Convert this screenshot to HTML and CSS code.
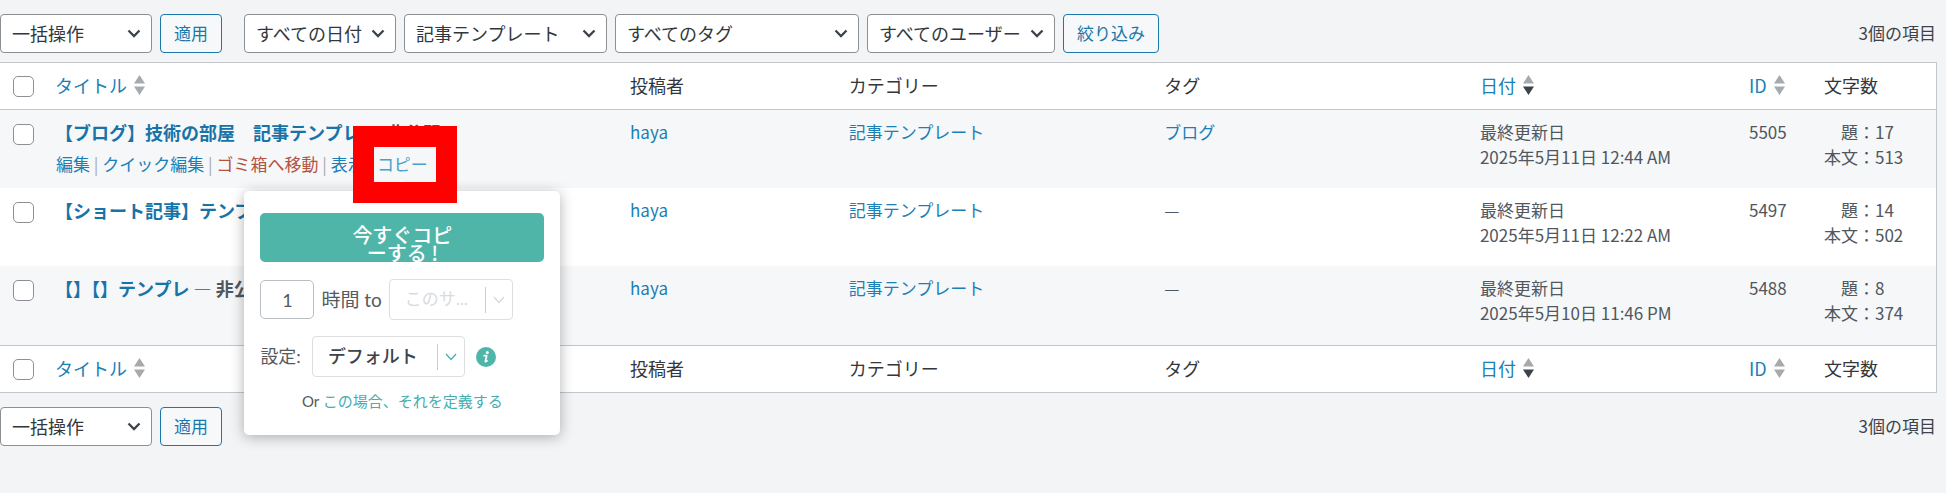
FILE: index.html
```html
<!DOCTYPE html>
<html lang="ja">
<head>
<meta charset="utf-8">
<title>投稿一覧</title>
<link rel="stylesheet" href="styles.css">
</head>
<body>
<svg class="defs" aria-hidden="true">
  <symbol id="chevron" viewBox="0 0 14 9"><path d="M1.5 1.5 7 7l5.500-5.500" fill="none" stroke="currentColor" stroke-width="2.300"/></symbol>
  <symbol id="chevron-thin" viewBox="0 0 12 8"><path d="M1 1 6 6.500 11 1" fill="none" stroke="currentColor" stroke-width="1.300"/></symbol>
  <symbol id="sort" viewBox="0 0 11 20"><path d="M5.500 0 11 8.500H0z" fill="#a7aaad"/><path class="sort-down" d="M0 11.500h11l-5.500 8.500z"/></symbol>
</svg>

<main class="page">
  <form class="tablenav">
    <span class="select bulk"><select aria-label="一括操作"><option>一括操作</option></select><svg class="chevron"><use href="#chevron"/></svg></span>
    <button type="button" class="button">適用</button>
    <div class="filters">
      <span class="select dates"><select aria-label="日付で絞り込む"><option>すべての日付</option></select><svg class="chevron"><use href="#chevron"/></svg></span>
      <span class="select categories"><select aria-label="カテゴリーで絞り込む"><option>記事テンプレート</option></select><svg class="chevron"><use href="#chevron"/></svg></span>
      <span class="select tags"><select aria-label="タグで絞り込む"><option>すべてのタグ</option></select><svg class="chevron"><use href="#chevron"/></svg></span>
      <span class="select users"><select aria-label="ユーザーで絞り込む"><option>すべてのユーザー</option></select><svg class="chevron"><use href="#chevron"/></svg></span>
      <button type="button" class="button">絞り込み</button>
    </div>
    <span class="total">3個の項目</span>
  </form>

  <table class="posts">
    <colgroup>
      <col class="col-check"><col class="col-title"><col class="col-author"><col class="col-category"><col class="col-tag"><col class="col-date"><col class="col-id"><col class="col-count">
    </colgroup>
    <thead>
      <tr>
        <th class="check"><input type="checkbox" aria-label="すべて選択"></th>
        <th><a class="sorter" href="#">タイトル<svg class="sort"><use href="#sort"/></svg></a></th>
        <th>投稿者</th>
        <th>カテゴリー</th>
        <th>タグ</th>
        <th><a class="sorter sorted" href="#">日付<svg class="sort"><use href="#sort"/></svg></a></th>
        <th><a class="sorter" href="#">ID<svg class="sort"><use href="#sort"/></svg></a></th>
        <th>文字数</th>
      </tr>
    </thead>
    <tbody>
      <tr>
        <td class="check"><input type="checkbox" aria-label="【ブログ】技術の部屋 を選択"></td>
        <td>
          <strong class="title"><a href="#">【ブログ】技術の部屋　記事テンプレ</a> — 非公開</strong>
          <div class="actions">
            <a href="#">編集</a> | <a href="#">クイック編集</a> | <a class="trash" href="#">ゴミ箱へ移動</a> | <a href="#">表示</a> |
            <span class="copy"><a class="copy-link" href="#">コピー</a>
              <div class="popup">
                <button type="button" class="copy-now">今すぐコピーする !</button>
                <div class="field-row">
                  <input class="times" id="times" type="text" value="1">
                  <label class="times-label" for="times">時間 to</label>
                  <span class="picker site"><select aria-label="コピー先" disabled><option>このサ...</option></select><svg class="thin"><use href="#chevron-thin"/></svg></span>
                </div>
                <div class="field-row settings">
                  <label for="profile">設定:</label>
                  <span class="picker profile"><select id="profile"><option>デフォルト</option></select><svg class="thin"><use href="#chevron-thin"/></svg></span>
                  <svg class="info" viewBox="0 0 20 20" role="img" aria-label="情報"><circle cx="10" cy="10" r="10" fill="#50b5a9"/><circle cx="11.300" cy="5.400" r="1.500" fill="#fff"/><path d="M8.200 8.700h2.500l-1.300 5.400c-.1.700.4.700 1.700-.2" fill="none" stroke="#fff" stroke-width="1.700" stroke-linejoin="round" stroke-linecap="round"/></svg>
                </div>
                <p class="define">Or <a href="#">この場合、それを定義する</a></p>
              </div>
              <span class="highlight"></span>
            </span>
          </div>
        </td>
        <td><a href="#">haya</a></td>
        <td><a href="#">記事テンプレート</a></td>
        <td><a href="#">ブログ</a></td>
        <td>最終更新日<br>2025年5月11日 12:44 AM</td>
        <td>5505</td>
        <td>　題：17<br>本文：513</td>
      </tr>
      <tr>
        <td class="check"><input type="checkbox" aria-label="【ショート記事】テンプレ を選択"></td>
        <td><strong class="title"><a href="#">【ショート記事】テンプレ</a> — 非公開</strong></td>
        <td><a href="#">haya</a></td>
        <td><a href="#">記事テンプレート</a></td>
        <td>—</td>
        <td>最終更新日<br>2025年5月11日 12:22 AM</td>
        <td>5497</td>
        <td>　題：14<br>本文：502</td>
      </tr>
      <tr>
        <td class="check"><input type="checkbox" aria-label="【】【】テンプレ を選択"></td>
        <td><strong class="title"><a href="#">【】【】テンプレ</a> — 非公開</strong></td>
        <td><a href="#">haya</a></td>
        <td><a href="#">記事テンプレート</a></td>
        <td>—</td>
        <td>最終更新日<br>2025年5月10日 11:46 PM</td>
        <td>5488</td>
        <td>　題：8<br>本文：374</td>
      </tr>
    </tbody>
    <tfoot>
      <tr>
        <th class="check"><input type="checkbox" aria-label="すべて選択"></th>
        <th><a class="sorter" href="#">タイトル<svg class="sort"><use href="#sort"/></svg></a></th>
        <th>投稿者</th>
        <th>カテゴリー</th>
        <th>タグ</th>
        <th><a class="sorter sorted" href="#">日付<svg class="sort"><use href="#sort"/></svg></a></th>
        <th><a class="sorter" href="#">ID<svg class="sort"><use href="#sort"/></svg></a></th>
        <th>文字数</th>
      </tr>
    </tfoot>
  </table>

  <form class="tablenav">
    <span class="select bulk"><select aria-label="一括操作"><option>一括操作</option></select><svg class="chevron"><use href="#chevron"/></svg></span>
    <button type="button" class="button">適用</button>
    <span class="total">3個の項目</span>
  </form>
</main>
</body>
</html>
```
FILE: styles.css
```css
* {
  box-sizing: border-box;
}

body {
  margin: 0;
  background: #f3f4f6;
  color: #50575e;
  font-family: "Noto Sans CJK JP", "Noto Sans", sans-serif;
  font-size: 17px;
  line-height: 25px;
}

button,
input,
select {
  margin: 0;
  font-family: inherit;
}

a {
  color: #1a80b6;
  text-decoration: none;
}

.defs {
  display: none;
}

.page {
  padding-right: 9px;
}

/* Toolbars */
.tablenav {
  display: flex;
  align-items: center;
  gap: 8px;
  padding: 14px 1px 9px 0;
}

.filters {
  display: flex;
  gap: 8px;
  margin-left: 14px;
}

.total {
  margin-left: auto;
  padding-bottom: 2px;
  color: #3c434a;
}

.select,
.picker {
  display: inline-grid;
  align-items: center;
}

.select > *,
.picker > * {
  grid-area: 1 / 1;
}

.select select {
  width: 100%;
  height: 39px;
  padding: 0 26px 2px 11px;
  appearance: none;
  border: 1px solid #8c8f94;
  border-radius: 4px;
  background: #fff;
  color: #32373c;
  font-size: 18px;
}

.bulk,
.dates {
  width: 152px;
}

.categories {
  width: 203px;
}

.tags {
  width: 244px;
}

.users {
  width: 188px;
}

.chevron {
  justify-self: end;
  width: 14px;
  height: 9px;
  margin-right: 11px;
  color: #3c434a;
  pointer-events: none;
}

.button {
  height: 39px;
  padding: 0 13px 2px;
  border: 1px solid #1a78ab;
  border-radius: 4px;
  background: #f6f8fa;
  color: #1a78ab;
  font-size: 17px;
}

/* Post list */
.posts {
  width: 100%;
  table-layout: fixed;
  border-spacing: 0;
  border: solid #c3c6cb;
  border-width: 1px 1px 1px 0;
  background: #fff;
}

.col-check {
  width: 45px;
}

.col-author {
  width: 11.3%;
}

.col-category {
  width: 16.3%;
}

.col-tag {
  width: 16.3%;
}

.col-date {
  width: 13.9%;
}

.col-id {
  width: 75px;
}

.col-count {
  width: 122px;
}

th,
td {
  padding: 9px 10px;
  text-align: left;
  vertical-align: top;
}

th {
  padding-bottom: 11px;
  color: #32373c;
  font-size: 18px;
  font-weight: 400;
  line-height: 26px;
}

td {
  height: 78px;
}

tbody tr:last-child td {
  height: 79px;
}

thead th {
  border-bottom: 1px solid #c3c6cb;
}

tfoot th {
  border-top: 1px solid #c3c6cb;
}

tbody tr:nth-child(odd) {
  background: #f6f7f9;
}

.check {
  padding: 13px 0 0 13px;
  line-height: 0;
}

td.check {
  padding-top: 14px;
}

.check input {
  width: 21px;
  height: 21px;
  appearance: none;
  border: 1px solid #8c8f94;
  border-radius: 5px;
  background: #fff;
}

.sorter {
  display: flex;
  align-items: center;
  gap: 7px;
}

.sort {
  width: 11px;
  height: 20px;
  color: #a7aaad;
}

.sort-down {
  fill: currentColor;
}

.sorted .sort {
  color: #3c434a;
}

.title {
  display: block;
  color: #50575e;
  font-size: 18px;
  line-height: 27px;
  white-space: nowrap;
}

.title a {
  color: #1774a8;
}

.actions {
  padding: 5px 0 0 1px;
  color: #a7aaad;
  white-space: nowrap;
}

.actions .trash {
  color: #b35340;
}

/* Copy popup */
.copy {
  position: relative;
  display: inline-block;
}

.actions .copy-link {
  color: #45a2c9;
}

.popup {
  position: absolute;
  z-index: 1;
  top: 40px;
  left: 50%;
  width: 316px;
  padding: 22px 16px 21px;
  transform: translateX(-50%);
  border-radius: 5px;
  background: #fff;
  box-shadow: 0 2px 14px rgba(0, 0, 0, 0.300);
  color: #555a60;
}

.popup::before {
  content: "";
  position: absolute;
  top: -11px;
  left: 50%;
  margin-left: -11px;
  border: 11px solid transparent;
  border-top: 0;
  border-bottom-color: #fff;
}

.copy-now {
  display: block;
  width: 100%;
  height: 49px;
  padding: 13px 88px 0;
  overflow: hidden;
  border: 0;
  border-radius: 5px;
  background: #50b5a9;
  color: #fff;
  font-size: 20px;
  font-weight: 500;
  line-height: 18px;
  white-space: normal;
  word-break: break-all;
  line-break: anywhere;
}

.field-row {
  display: flex;
  align-items: center;
  gap: 7px;
  margin-top: 17px;
  font-family: Lato, "Noto Sans CJK JP", sans-serif;
  font-size: 18px;
}

.settings {
  gap: 11px;
  margin-top: 16px;
}

.times {
  width: 54px;
  height: 39px;
  border: 1px solid #b9bdc4;
  border-radius: 5px;
  color: #555a60;
  font-size: 18px;
  text-align: center;
}

.times-label {
  font-size: 19px;
}

.picker select {
  width: 100%;
  height: 41px;
  padding: 0 30px 2px 15px;
  appearance: none;
  border: 1px solid #dcdee1;
  border-radius: 4px;
  background: linear-gradient(#c8cbcf, #c8cbcf) right 26px center / 1px 26px no-repeat #fff;
  color: #3c434a;
  font-size: 18px;
  font-weight: 500;
}

.picker select:disabled {
  color: #d9dbde;
  font-size: 17px;
  font-weight: 400;
  opacity: 1;
}

.site {
  width: 124px;
  color: #d5d8db;
}

.profile {
  width: 153px;
  color: #45b0b3;
}

.thin {
  justify-self: end;
  width: 12px;
  height: 8px;
  margin-right: 8px;
  pointer-events: none;
}

.info {
  width: 20px;
  height: 20px;
}

.define {
  margin: 12px 0 0;
  font-family: Lato, "Noto Sans CJK JP", sans-serif;
  font-size: 15px;
  text-align: center;
}

.define a {
  color: #45aeb0;
}

.highlight {
  position: absolute;
  z-index: 2;
  inset: -25px -29px -27px -24px;
  border: 21px solid #f00;
  pointer-events: none;
}
```
